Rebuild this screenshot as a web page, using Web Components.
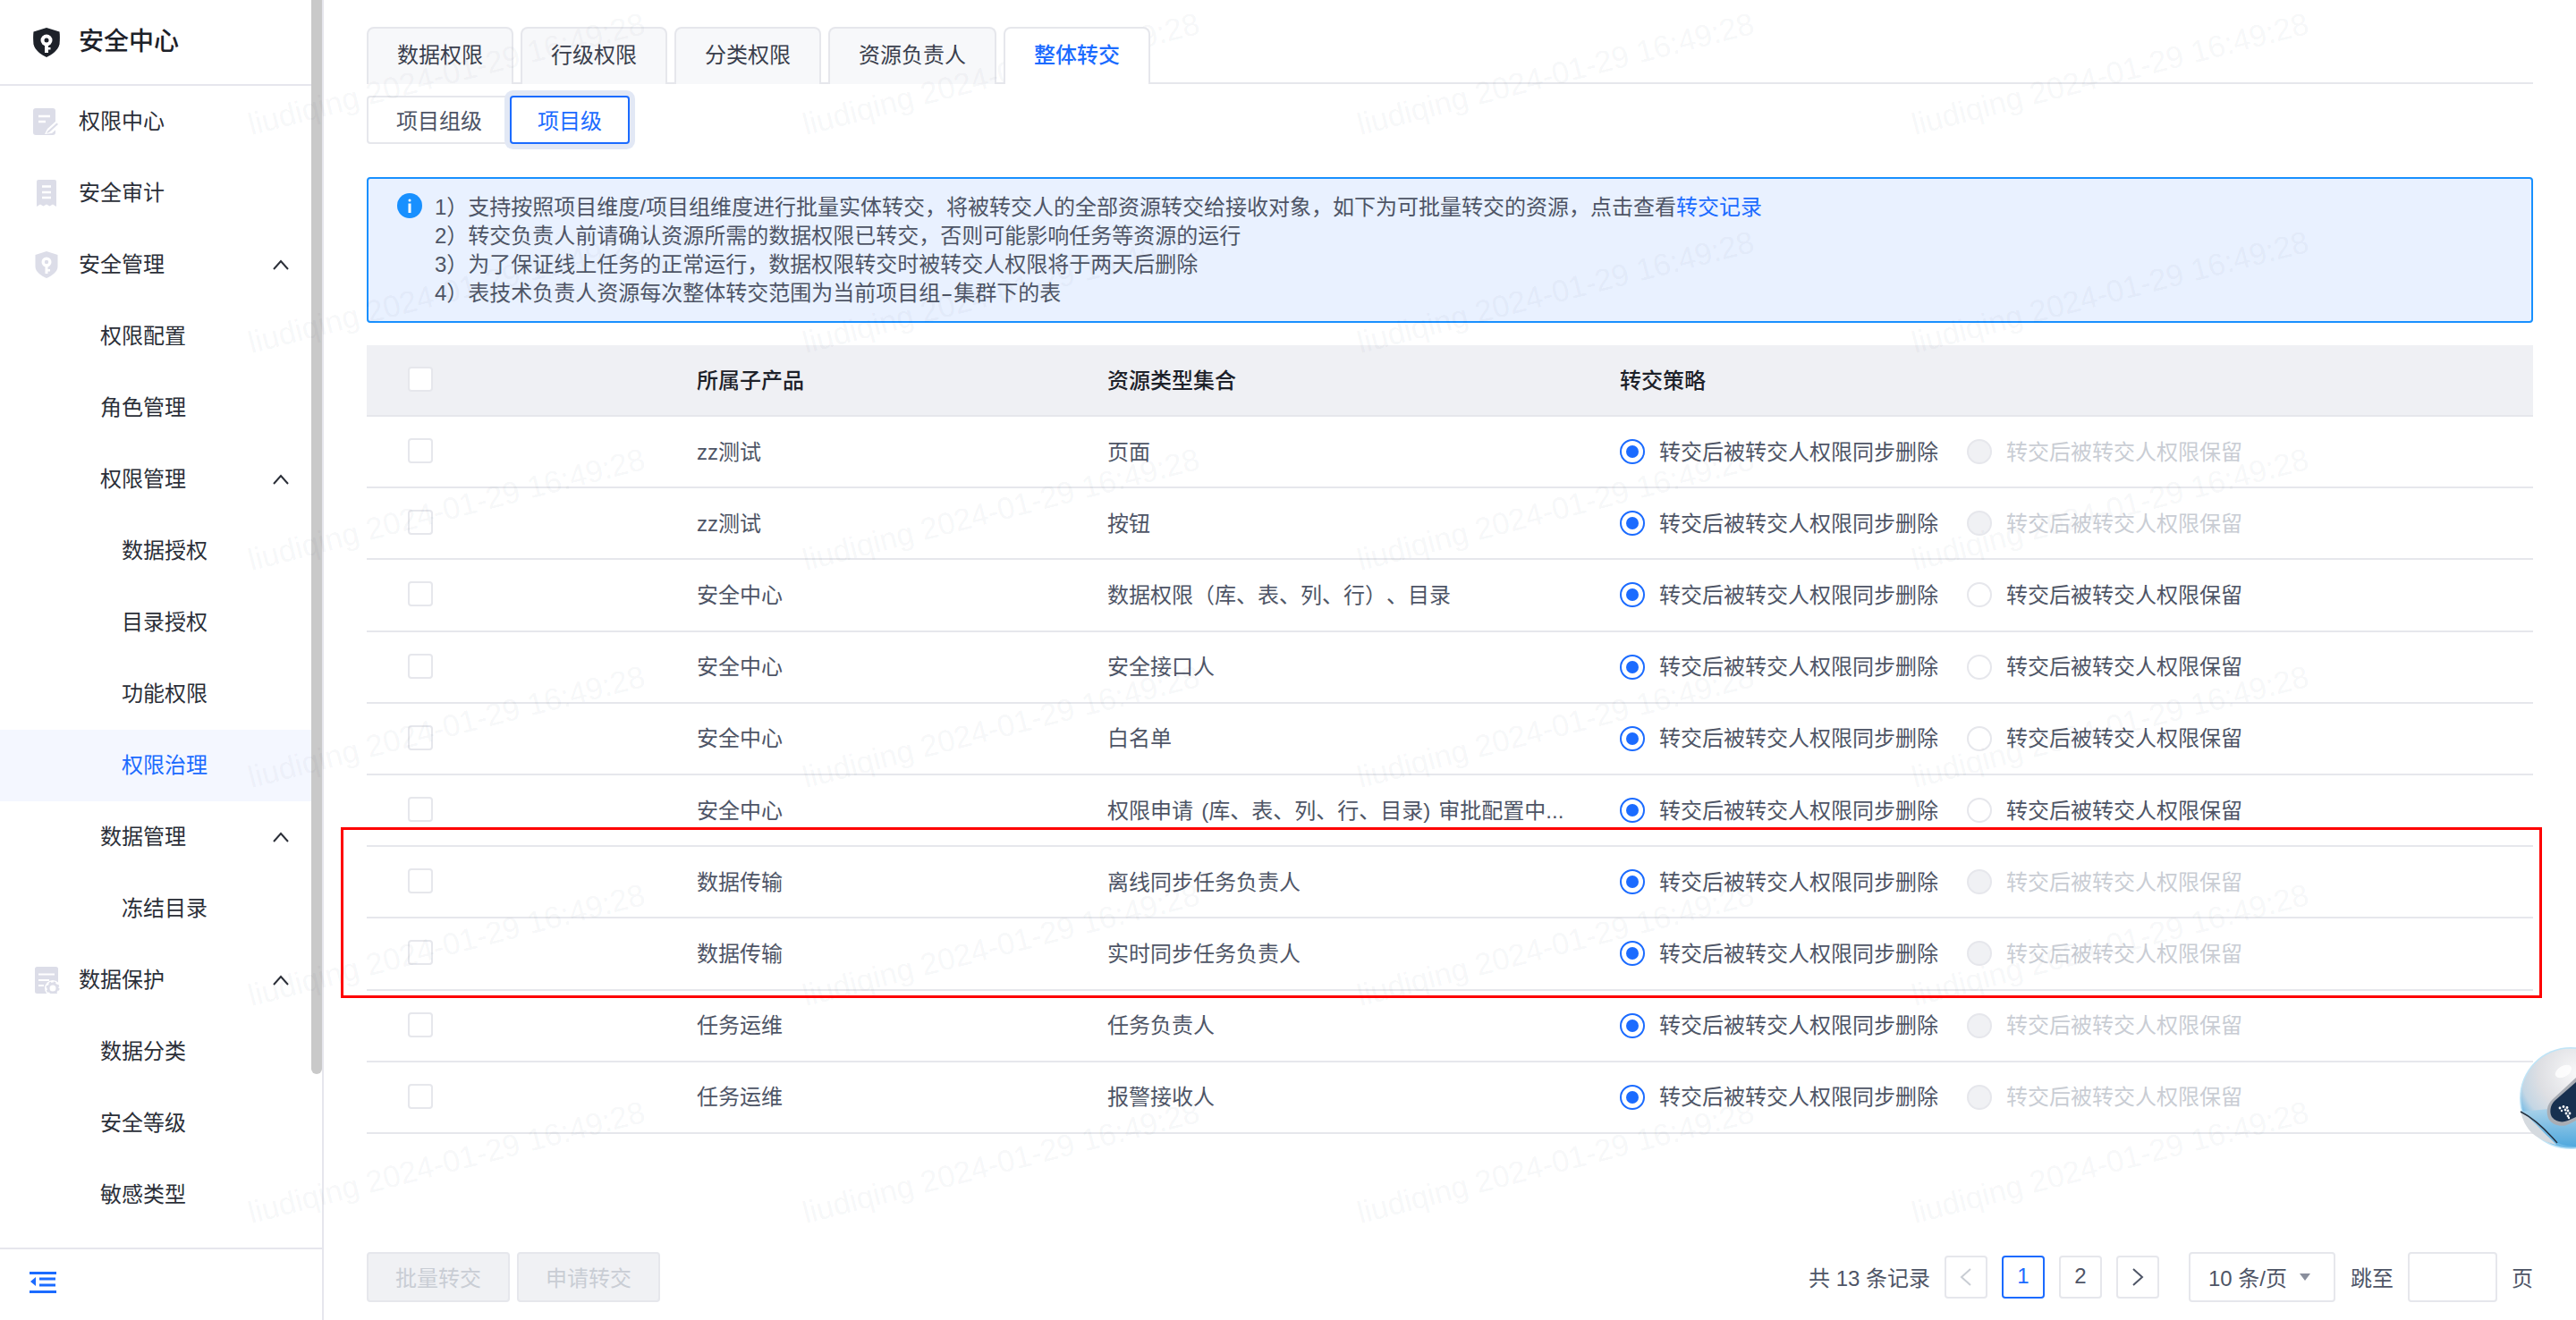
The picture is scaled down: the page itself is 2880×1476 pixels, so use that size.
<!DOCTYPE html>
<html lang="zh-CN">
<head>
<meta charset="utf-8">
<title>安全中心</title>
<style>
html,body{margin:0;padding:0;background:#fff}
body{font-family:"Liberation Sans","Noto Sans CJK SC",sans-serif;font-size:24px;color:#4e5566;text-spacing-trim:space-all}
</style>
</head>
<body>
<app-shell>
  <side-nav></side-nav>
  <main-panel></main-panel>
</app-shell>
<water-mark></water-mark>
<red-frame></red-frame>
<robot-ball></robot-ball>
<script>
const FONT='"Liberation Sans","Noto Sans CJK SC",sans-serif';
const BLUE='#1b6bff';
class Base extends HTMLElement{
  render(html){ if(!this.shadowRoot) this.attachShadow({mode:'open'}); this.shadowRoot.innerHTML=html; }
}
class AppShell extends Base{
  connectedCallback(){this.render(`<style>:host{display:flex;width:2880px;height:1476px;overflow:hidden;background:#fff}</style><slot></slot>`)}
}
const ICONS={
 doc:`<svg width="30" height="30" viewBox="0 0 30 30"><rect x="0" y="0" width="25" height="30" rx="3" fill="#dcdde8"/><path d="M6 9h13M6 15h8" stroke="#fff" stroke-width="2.6"/><path d="M13 29l3-6 10-9 5 5-10 9z" fill="#fff"/><path d="M16.500 25.500l10-9 1.500 1.500-10 9-3 1z" fill="#dcdde8"/></svg>`,
 audit:`<svg width="30" height="30" viewBox="0 0 30 30"><path d="M4 2a2 2 0 0 1 2-2h18a2 2 0 0 1 2 2v28l-4-2.500-3.500 2-3.500-2-3.500 2-3.500-2-4 2.500z" fill="#dcdde8"/><path d="M10 7.500h10M10 14h10M10 20h10" stroke="#fff" stroke-width="2.400"/></svg>`,
 shield:`<svg width="30" height="30" viewBox="0 0 30 30"><path d="M15 0l12.500 4v13c0 6-6.500 10.500-12.500 13C9 27.500 2.500 23 2.500 17V4z" fill="#dcdde8"/><circle cx="15" cy="12" r="5.500" fill="#fff"/><circle cx="15" cy="12" r="2.200" fill="#dcdde8"/><path d="M13.500 16h3v9h-3zM16 20h3v2.400h-3z" fill="#fff"/></svg>`,
 data:`<svg width="30" height="30" viewBox="0 0 30 30"><rect x="2" y="0" width="26" height="30" rx="2.500" fill="#dcdde8"/><path d="M6 8.500h18M6 15h12M6 21h6" stroke="#fff" stroke-width="2"/><circle cx="22" cy="24" r="9" fill="#fff"/><circle cx="22" cy="24" r="5" fill="none" stroke="#dcdde8" stroke-width="3"/><circle cx="22" cy="24" r="6.500" fill="none" stroke="#dcdde8" stroke-width="2" stroke-dasharray="2.500 2.600"/></svg>`
};
class NavItem extends Base{
  connectedCallback(){
    const lvl=+this.getAttribute('level')||1, icon=this.getAttribute('icon'), arrow=this.hasAttribute('arrow'), act=this.hasAttribute('active');
    const pad={1:37,2:112,3:136}[lvl];
    this.render(`<style>
      :host{display:flex;align-items:center;height:80px;box-sizing:border-box;padding-left:${pad}px;padding-right:25px;font-size:24px;color:#2b2f38;${act?`background:#f4f7ff;color:${BLUE};`:''}}
      .i{width:30px;height:30px;margin-right:21px;display:block}
      .t{flex:1;line-height:32px}
      svg.a{display:block}
    </style>${icon?`<span class="i">${ICONS[icon]}</span>`:''}<span class="t"><slot></slot></span>${arrow?`<svg class="a" width="18" height="12" viewBox="0 0 18 12"><path d="M1 11l8-9 8 9" fill="none" stroke="#2b2f38" stroke-width="2"/></svg>`:''}`);
  }
}
class SideNav extends Base{
  connectedCallback(){
    const items=[
      ['权限中心',1,'doc'],['安全审计',1,'audit'],['安全管理',1,'shield',1],['权限配置',2],['角色管理',2],['权限管理',2,null,1],
      ['数据授权',3],['目录授权',3],['功能权限',3],['权限治理',3,null,0,1],['数据管理',2,null,1],['冻结目录',3],['数据保护',1,'data',1],['数据分类',2],['安全等级',2],['敏感类型',2]];
    const rows=items.map(([t,l,i,a,ac])=>`<nav-item level="${l}" ${i?`icon="${i}"`:''} ${a?'arrow':''} ${ac?'active':''}>${t}</nav-item>`).join('');
    this.render(`<style>
      :host{display:flex;flex-direction:column;width:362px;flex:none;height:1476px;box-sizing:border-box;border-right:2px solid #e6e6ed;background:#fff}
      .scroll{display:flex;height:1395px;overflow:hidden;flex:none}
      .list{width:348px;flex:none}
      .head{height:94px;border-bottom:2px solid #e6e6ed;display:flex;align-items:center;padding-left:37px;font-size:28px;font-weight:500;color:#1d2129;box-sizing:content-box}
      .head svg{margin-right:21px;display:block}
      .head span{position:relative;top:-3px}
      .bar{width:12px;height:1201px;background:#c9c9c9;border-radius:0 0 6px 6px;flex:none}
      .foot{border-top:2px solid #e6e6ed;flex:1;display:flex;align-items:flex-start;padding:25px 0 0 33px}
      .foot svg{display:block}
    </style>
    <div class="scroll"><div class="list">
      <div class="head"><svg width="30" height="33" viewBox="0 0 30 33"><path d="M15 0l14.500 4.500c.5 3 .5 9 0 14C28 25.500 21 30 15 33 9 30 2 25.500.5 18.500c-.5-5-.5-11 0-14z" fill="#1d2129"/><circle cx="15" cy="14" r="6.500" fill="#fff"/><circle cx="15" cy="14" r="2.500" fill="#1d2129"/><path d="M13 19h4v9h-4zM16 22h3.500v2.500H16z" fill="#fff"/></svg><span>安全中心</span></div>
      ${rows}
    </div><div class="bar"></div></div>
    <div class="foot"><svg width="30" height="25" viewBox="0 0 30 25"><path d="M0 1.500h30M11 8h18M11 15h18M0 22.500h30" stroke="${BLUE}" stroke-width="3"/><path d="M7 6v10L1 11z" fill="${BLUE}"/></svg></div>`);
  }
}
class TabBar extends Base{
  connectedCallback(){
    const tabs=['数据权限','行级权限','分类权限','资源负责人','整体转交'];
    this.render(`<style>
      :host{display:flex;height:64px;box-sizing:border-box;border-bottom:2px solid #e6e7ec;margin-top:30px}
      .t{box-sizing:border-box;height:64px;padding:0 32px;display:flex;align-items:center;justify-content:center;border:2px solid #e6e7ec;border-bottom:none;border-radius:8px 8px 0 0;background:#f7f8fa;color:#3a3f4d;margin-right:8px;font-size:24px;line-height:32px}
      .t span{position:relative;top:-1px}
      .on{background:#fff;color:${BLUE};font-weight:500;height:64px;position:relative;z-index:1}
    </style>${tabs.map((t,i)=>`<div class="t ${i==4?'on':''}"><span>${t}</span></div>`).join('')}`);
  }
}
class SegSwitch extends Base{
  connectedCallback(){
    this.render(`<style>
      :host{display:flex;margin-top:13px;height:54px}
      .b{box-sizing:border-box;height:54px;display:flex;align-items:center;justify-content:center;white-space:nowrap;border:2px solid #e6e7ec;color:#4e5566;font-size:24px;background:#fff}
      .a{border-radius:4px 0 0 4px;width:160px;border-right:none}
      .c{border:2px solid ${BLUE};color:${BLUE};border-radius:4px;box-shadow:0 0 0 6px #e2e8f5;width:134px;position:relative}
      span{position:relative;top:-1px}
    </style><div class="b a"><span>项目组级</span></div><div class="b c"><span>项目级</span></div>`);
  }
}
class InfoAlert extends Base{
  connectedCallback(){
    this.render(`<style>
      :host{display:flex;box-sizing:border-box;height:163px;margin-top:37px;border:2px solid #1890ff;border-radius:4px;background:#e9f1ff;padding:16px 0 0 32px;color:#4e5566;font-size:24px}
      .ic{width:28px;height:28px;margin-right:14px;flex:none}
      .tx{line-height:32px}
      .tx div{white-space:pre}
      a{color:${BLUE};text-decoration:none}
      svg{display:block}
      .hy{display:inline-block;width:15px;text-align:center;transform:scaleX(1.7)}
    </style><div class="ic"><svg width="28" height="28" viewBox="0 0 28 28"><circle cx="14" cy="14" r="14" fill="#1890ff"/><rect x="12.500" y="11.500" width="3" height="10.500" fill="#fff"/><rect x="12.500" y="6.500" width="3" height="3" rx="1.500" fill="#fff"/></svg></div>
    <div class="tx"><div>1）支持按照项目维度/项目组维度进行批量实体转交，将被转交人的全部资源转交给接收对象，如下为可批量转交的资源，点击查看<a>转交记录</a></div>
    <div>2）转交负责人前请确认资源所需的数据权限已转交，否则可能影响任务等资源的运行</div>
    <div>3）为了保证线上任务的正常运行，数据权限转交时被转交人权限将于两天后删除</div>
    <div>4）表技术负责人资源每次整体转交范围为当前项目组<span class="hy">-</span>集群下的表</div></div>`);
  }
}
class CheckBox extends Base{
  connectedCallback(){this.render(`<style>:host{display:block;width:28px;height:28px;box-sizing:border-box;border:2px solid #e6e7ec;border-radius:4px;background:#fff}</style>`)}
}
class RadioOpt extends Base{
  connectedCallback(){
    const on=this.hasAttribute('on'),dis=this.hasAttribute('disabled');
    this.render(`<style>
      :host{display:flex;align-items:center;color:${dis?'#c9cdd4':'#4e5566'};font-size:24px}
      .r{width:28px;height:28px;box-sizing:border-box;border-radius:50%;margin-right:16px;flex:none;display:flex;align-items:center;justify-content:center;
         border:2px solid ${on?BLUE:'#e6e7ec'};background:${dis?'#f0f1f4':'#fff'}}
      .d{width:14px;height:14px;border-radius:50%;background:${BLUE}}
      span{white-space:nowrap;position:relative;top:-2px}
    </style><div class="r">${on?'<div class="d"></div>':''}</div><span><slot></slot></span>`);
  }
}
class DataRow extends Base{
  connectedCallback(){
    const dis=this.hasAttribute('lock');
    this.render(`<style>
      :host{display:grid;grid-template-columns:369px 459px 573px 1fr;height:80.200px;box-sizing:border-box;border-bottom:2px solid #e6e7ec;align-items:center;font-size:24px;color:#4e5566}
      .c{padding-left:46px;position:relative;top:-1px}
      .t{position:relative;top:-2px;white-space:nowrap;word-spacing:2.500px}
      .s{display:flex;gap:32px}
    </style><div class="c"><check-box></check-box></div><div class="t">${this.getAttribute('p')}</div><div class="t">${this.getAttribute('r')}</div>
    <div class="s"><radio-opt on>转交后被转交人权限同步删除</radio-opt><radio-opt ${dis?'disabled':''}>转交后被转交人权限保留</radio-opt></div>`);
  }
}
class DataTable extends Base{
  connectedCallback(){
    const rows=[['zz测试','页面',1],['zz测试','按钮',1],['安全中心','数据权限（库、表、列、行）、目录',0],['安全中心','安全接口人',0],['安全中心','白名单',0],
      ['安全中心','权限申请 (库、表、列、行、目录) 审批配置中...',0],['数据传输','离线同步任务负责人',1],['数据传输','实时同步任务负责人',1],['任务运维','任务负责人',1],['任务运维','报警接收人',1]];
    this.render(`<style>
      :host{display:block;margin-top:25px}
      .h{display:grid;grid-template-columns:369px 459px 573px 1fr;height:80px;box-sizing:border-box;background:#eff0f4;border-bottom:2px solid #e6e7ec;align-items:center;color:#1d2129;font-weight:500;font-size:24px}
      .c{padding-left:46px;position:relative;top:-1px}
      .h span{position:relative;top:-2px}
    </style><div class="h"><div class="c"><check-box></check-box></div><span>所属子产品</span><span>资源类型集合</span><span>转交策略</span></div>
    ${rows.map(r=>`<data-row p="${r[0]}" r="${r[1]}" ${r[2]?'lock':''}></data-row>`).join('')}`);
  }
}
class FootBar extends Base{
  connectedCallback(){
    const box='box-sizing:border-box;border:2px solid #e6e7ec;border-radius:4px;display:flex;align-items:center;justify-content:center;background:#fff;flex:none;';
    this.render(`<style>
      :host{display:flex;align-items:center;height:56px;position:absolute;left:410px;right:48px;top:1400px;font-size:24px;color:#4e5566}
      .btn{${box}width:160px;height:56px;background:#f0f1f4;color:#c9cdd4;margin-right:8px}
      .sp{flex:1}
      .pg{${box}width:48px;height:48px;margin-right:16px;line-height:1}
      .cur{border-color:${BLUE};color:${BLUE}}
      .sel{${box}width:164px;height:56px;margin:0 17px;gap:14px;justify-content:flex-start;padding-left:20px}
      .inp{${box}width:100px;height:56px;margin:0 16px}
      svg{display:block}
      .tx{position:relative;top:-1px}
    </style>
    <div class="btn"><span class="tx">批量转交</span></div><div class="btn"><span class="tx">申请转交</span></div><div class="sp"></div>
    <span class="tx" style="margin-right:16px">共 13 条记录</span>
    <div class="pg"><svg width="14" height="20" viewBox="0 0 14 20"><path d="M12 1L2 10l10 9" fill="none" stroke="#c9cdd4" stroke-width="2"/></svg></div>
    <div class="pg cur"><span class="tx">1</span></div><div class="pg"><span class="tx">2</span></div>
    <div class="pg"><svg width="14" height="20" viewBox="0 0 14 20"><path d="M2 1l10 9-10 9" fill="none" stroke="#4e5566" stroke-width="2"/></svg></div>
    <div class="sel"><span class="tx">10 条/页</span><svg width="12" height="8" viewBox="0 0 12 8"><path d="M0 0h12L6 8z" fill="#8a8f9d"/></svg></div>
    <span class="tx">跳至</span><div class="inp"></div><span class="tx">页</span>`);
  }
}
class MainPanel extends Base{
  connectedCallback(){
    this.render(`<style>:host{display:block;flex:1;box-sizing:border-box;padding:0 48px;height:1476px}</style>
    <tab-bar></tab-bar><seg-switch></seg-switch><info-alert></info-alert><data-table></data-table><foot-bar></foot-bar>`);
  }
}
class WaterMark extends Base{
  connectedCallback(){
    const xs=[283,903,1523,2143], ys=[153,397,640,883,1127,1370];
    let h='';
    for(const y of ys)for(const x of xs)h+=`<span style="left:${x}px;top:${y-34}px">liudiqing 2024-01-29 16:49:28</span>`;
    this.render(`<style>
      :host{display:block;position:absolute;left:0;top:0;width:2880px;height:1476px;overflow:hidden;pointer-events:none}
      span{position:absolute;font:34.500px/40px ${FONT};color:rgba(30,40,70,.05);white-space:nowrap;transform-origin:0 100%;transform:rotate(-14.500deg)}
    </style>${h}`);
  }
}
class RedFrame extends Base{
  connectedCallback(){this.render(`<style>:host{display:block;position:absolute;left:381px;top:925px;width:2461px;height:191px;box-sizing:border-box;border:3.500px solid #fe0000;pointer-events:none}</style>`)}
}
class RobotBall extends Base{
  connectedCallback(){
    this.render(`<style>:host{display:block;position:absolute;left:2810px;top:1165px;width:70px;height:125px;overflow:hidden}svg{display:block}</style>
    <svg width="70" height="125" viewBox="2810 1165 70 125">
      <defs>
        <radialGradient id="g" cx="2880" cy="1200" r="75" gradientUnits="userSpaceOnUse"><stop offset="0" stop-color="#f8f8f9"/><stop offset=".55" stop-color="#dedfe3"/><stop offset=".82" stop-color="#c4d6e4"/><stop offset="1" stop-color="#6db9e6"/></radialGradient>
        <linearGradient id="b" x1="0" y1="0" x2="0" y2="1"><stop offset="0" stop-color="#a9d2ea"/><stop offset="1" stop-color="#4fa8dd"/></linearGradient>
      </defs>
      <circle cx="2874" cy="1228" r="57" fill="#bfe4f7"/>
      <circle cx="2874" cy="1228" r="55.500" fill="url(#g)"/>
      <path d="M2818 1243c10 8 25 22 42 35 6 3 14 4 20 4v-42h-30z" fill="url(#b)"/>
      <path d="M2880 1205l-26 24c-7 6-8 16-4 23 4 6 14 9 22 5l8-4z" fill="#a9adb4"/>
      <path d="M2880 1210l-24 21c-5 5-6 13-3 18 4 5 11 7 18 4l9-4z" fill="#17304f"/>
      <path d="M2818 1243c2 8 6 18 14 25 6 5 16 10 26 12l-8-8c-8-7-20-22-32-29z" fill="#d5dadf"/>
      <path d="M2818 1243c12 6 28 20 41 35" fill="none" stroke="#24303f" stroke-width="1.500"/>
      <ellipse cx="2866" cy="1198" rx="10" ry="6" fill="#fff" opacity=".8" transform="rotate(-30 2866 1198)"/>
      <g fill="#fff"><circle cx="2862" cy="1239" r="1.400"/><circle cx="2866" cy="1237.500" r="1.400"/><circle cx="2870" cy="1238.500" r="1.400"/><circle cx="2864" cy="1242" r="1.200"/><circle cx="2868" cy="1241" r="1.400"/><circle cx="2871" cy="1242" r="1.400"/><circle cx="2869" cy="1245" r="1.400"/><circle cx="2873" cy="1245" r="1.400"/><circle cx="2871" cy="1248" r="1.400"/><circle cx="2872" cy="1250" r="1.200"/></g>
    </svg>`);
  }
}
for(const [n,c] of Object.entries({'app-shell':AppShell,'nav-item':NavItem,'side-nav':SideNav,'tab-bar':TabBar,'seg-switch':SegSwitch,'info-alert':InfoAlert,'check-box':CheckBox,'radio-opt':RadioOpt,'data-row':DataRow,'data-table':DataTable,'foot-bar':FootBar,'main-panel':MainPanel,'water-mark':WaterMark,'red-frame':RedFrame,'robot-ball':RobotBall}))customElements.define(n,c);
</script>
</body>
</html>
